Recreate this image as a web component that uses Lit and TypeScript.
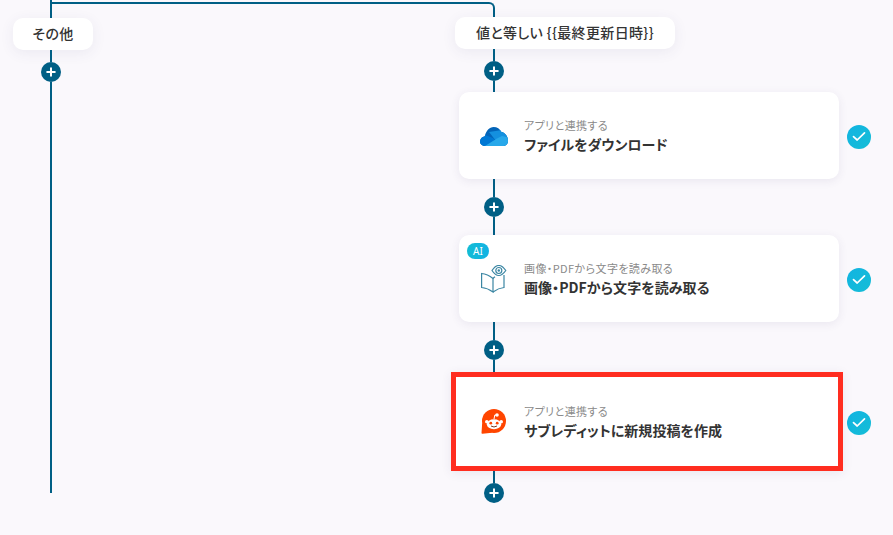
import { LitElement, html, css } from "lit";
import { customElement } from "lit/decorators.js";

const plus = html`<div class="plus"><svg width="10" height="10" viewBox="0 0 10 10"><path d="M5 1.200v7.600M1.200 5h7.600" stroke="#fff" stroke-width="2" stroke-linecap="round"/></svg></div>`;

const check = html`<div class="check"><svg width="14" height="11" viewBox="0 0 14 11"><path d="M1.500 5.600 5.200 9 12.500 1.800" fill="none" stroke="#fff" stroke-width="1.700" stroke-linecap="round" stroke-linejoin="round"/></svg></div>`;

const cloud = html`<svg class="ic low" width="28" height="19" viewBox="0 0 28 19">
  <defs><clipPath id="od"><path d="M5 19C2 19 0 16.800 0 14.500c0-2.700 2-4.800 4.800-5.300C6 3.800 9.500 0 13.600 0c3.400 0 6.400 1.900 7.900 5C25.200 5.500 28 9.600 28 14c0 2.800-2.200 5-5 5Z"/></clipPath></defs>
  <g clip-path="url(#od)">
    <rect width="28" height="19" fill="#0364b8"/>
    <path d="M0 8 5 8 13 11 20 19H0Z" fill="#0078d4"/>
    <path d="M9 5 22 3 30 8V19H20Z" fill="#1490df"/>
    <path d="M5 19 17 11.500 22 9 30 11V19Z" fill="#28a8ea"/>
  </g></svg>`;

const book = html`<svg class="ic" width="26" height="28" viewBox="0 0 26 28" fill="none" stroke="#3b86a3" stroke-width="1.200">
  <path d="M.6 8.500Q6.500 9 12 13.500V27Q6.500 23 .6 22.500Z"/>
  <path d="M12 13.500Q13 12.500 14 11.800M23 10V22.500Q17.500 23 12 27"/>
  <path d="M11 5.500Q17.700-4.500 24.800 5.500Q17.700 15.500 11 5.500Z"/>
  <circle cx="17.800" cy="5.500" r="3"/>
  <circle cx="17.800" cy="5.500" r="1.200" fill="#3b86a3" stroke="none"/>
</svg>`;

const snoo = html`<svg class="ic" width="26" height="25" viewBox="0 0 26 25">
  <circle cx="13" cy="12" r="12" fill="#ff4500"/>
  <path d="M1.200 14 .5 24 Q.5 24.800 1.500 24.700L11 23.800Z" fill="#ff4500"/>
  <circle cx="5.800" cy="12.800" r="1.800" fill="#fff"/>
  <circle cx="20.200" cy="12.800" r="1.800" fill="#fff"/>
  <ellipse cx="13" cy="15.200" rx="7.200" ry="5" fill="#fff"/>
  <path d="M13 10 13.800 6 15.500 6.300" fill="none" stroke="#fff" stroke-width="1"/>
  <circle cx="16" cy="6" r="1.800" fill="#fff"/>
  <circle cx="9.800" cy="14.200" r="1.400" fill="#ff4500"/>
  <circle cx="16.200" cy="14.200" r="1.400" fill="#ff4500"/>
  <path d="M10 17Q13 19 16 17" fill="none" stroke="#7a3a22" stroke-width="1"/>
</svg>`;

@customElement("app-root")
export class AppRoot extends LitElement {
  static styles = css`
    :host { display: block; width: 893px; height: 535px; overflow: hidden; background: #faf8fc;
      font-family: "Noto Sans CJK JP", "Noto Sans", sans-serif; color: #333; font-feature-settings: "palt"; }
    .canvas { display: grid; width: 893px; height: 535px; }
    .canvas > * { grid-area: 1 / 1; }
    .branch { box-sizing: border-box; width: 445px; height: 17px; margin: 2px 0 0 50px;
      border-top: 2px solid #005f85; border-right: 2px solid #005f85; border-top-right-radius: 6px; }
    .cols { display: flex; }
    .left { width: 451px; padding-left: 13px; box-sizing: border-box; display: flex; flex-direction: column; align-items: flex-start; }
    .left .v { margin-left: 37px; }
    .left .plus { margin-left: 28px; }
    .right { flex: 1; display: flex; flex-direction: column; align-items: flex-start; padding-top: 17px; }
    .v { width: 2px; background: #005f85; flex: none; }
    .right .v { margin-left: 42px; }
    .plus { width: 20px; height: 20px; border-radius: 50%; background: #005f85; flex: none;
      display: flex; align-items: center; justify-content: center; }
    .right .plus { margin-left: 33px; }
    .tag { height: 32px; box-sizing: border-box; padding-bottom: 2px; background: #fff; border-radius: 10px; display: flex; align-items: center; justify-content: center;
      font-size: 14px; font-weight: 500; letter-spacing: .35px; box-shadow: 0 3px 14px rgba(70,60,110,.08); white-space: nowrap; flex: none; }
    .tag.a { width: 80px; }
    .tag.b { width: 220px; margin-left: 4px; }
    .row { display: flex; align-items: center; flex: none; }
    .card { position: relative; box-sizing: border-box; width: 380px; height: 87px; margin-left: 8px; background: #fff; border-radius: 10px;
      box-shadow: 0 2px 10px rgba(70,60,110,.09); display: flex; align-items: center; padding-left: 20px; }
    .card.hl { width: 392px; height: 99px; margin-left: 0; border: 5px solid #ff2d20; border-radius: 0; padding-left: 23px; }
    .ib { width: 30px; display: flex; justify-content: center; flex: none; margin-right: 15px; }
    .ic { display: block; flex: none; }
    .low { margin-top: 1px; }
    .txt { display: flex; flex-direction: column; padding-bottom: 1px; }
    .sub { font-size: 11px; line-height: 16px; letter-spacing: .4px; color: #8a8a8a; white-space: nowrap; }
    .ttl { font-size: 14px; line-height: 20px; letter-spacing: .05px; font-weight: 700; color: #333; white-space: nowrap; margin-top: 1px; }
    .check { width: 24px; height: 24px; border-radius: 50%; margin: 2px 0 0 8px; flex: none;
      background: linear-gradient(135deg, #12b4e2, #14bdd6); display: flex; align-items: center; justify-content: center; }
    .hl + .check { margin-left: 4px; }
    .ai { position: absolute; left: 8px; top: 8px; width: 22px; height: 16px; border-radius: 8px;
      background: linear-gradient(90deg, #13bcd4, #12b2e4); color: #fff; font-size: 10px; line-height: 16px; text-align: center; font-family: "Noto Sans", sans-serif; }
  `;

  private card(icon: unknown, sub: string, title: string, opts: { ai?: boolean; hl?: boolean } = {}) {
    return html`<div class="row">
      <div class="card ${opts.hl ? "hl" : ""}">
        ${opts.ai ? html`<div class="ai">AI</div>` : ""}
        <div class="ib">${icon}</div>
        <div class="txt"><div class="sub">${sub}</div><div class="ttl">${title}</div></div>
      </div>
      ${check}
    </div>`;
  }

  private v(h: number) {
    return html`<div class="v" style="height:${h}px"></div>`;
  }

  render() {
    return html`<div class="canvas">
      <div class="branch"></div>
      <div class="cols">
        <div class="left">
          ${this.v(18)}
          <div class="tag a">その他</div>
          ${this.v(12)}
          ${plus}
          ${this.v(411)}
        </div>
        <div class="right">
          <div class="tag b">値と等しい {{最終更新日時}}</div>
          ${this.v(12)}${plus}${this.v(11)}
          ${this.card(cloud, "アプリと連携する", "ファイルをダウンロード")}
          ${this.v(18)}${plus}${this.v(18)}
          ${this.card(book, "画像・PDFから文字を読み取る", "画像・PDFから文字を読み取る", { ai: true })}
          ${this.v(18)}${plus}${this.v(12)}
          ${this.card(snoo, "アプリと連携する", "サブレディットに新規投稿を作成", { hl: true })}
          ${this.v(12)}${plus}
        </div>
      </div>
    </div>`;
  }
}
